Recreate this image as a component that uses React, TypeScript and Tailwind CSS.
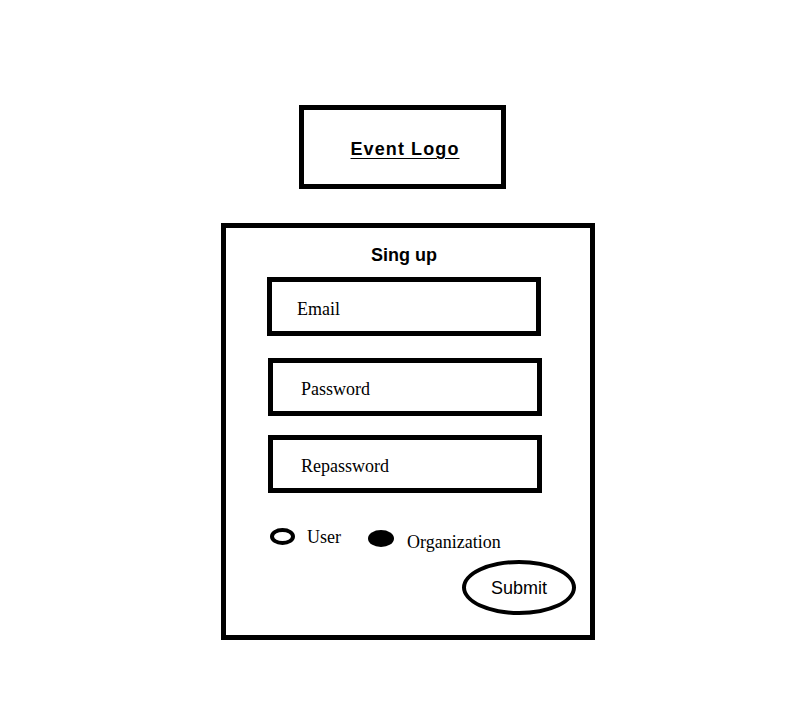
import React, { useState } from 'react'

const sans = { fontFamily: '"Liberation Sans", Arial, sans-serif' }

const fields = [
  { label: 'Email', cls: 'mt-[12px] ml-[41px] h-[59px]', pad: 'pl-[25px]' },
  { label: 'Password', cls: 'mt-[22px] ml-[42px] h-[58px]', pad: 'pl-[28px]' },
  { label: 'Repassword', cls: 'mt-[19px] ml-[42px] h-[58px]', pad: 'pl-[28px]' },
]

function App() {
  const [ role, setRole ] = useState('organization')

  return (
    <div className="min-h-[720px] w-full bg-white pt-[105px] flex flex-col items-start font-['Liberation_Sans',Arial,sans-serif] text-black">
      {/* logo placeholder */}
      <div className="ml-[299px] w-[207px] h-[84px] border-[5px] border-black flex items-center justify-center pl-[5px] pt-[4px]">
        <span className="text-[18px] leading-[20px] font-bold underline underline-offset-[3px] tracking-[1.1px]">Event Logo</span>
      </div>

      <div className="mt-[34px] ml-[221px] w-[374px] h-[417px] border-[5px] border-black flex flex-col">
        <h2 className="pt-[17px] pr-[8px] text-center text-[18px] leading-[20px] font-bold">Sing up</h2>

        {fields.map(f => (
          <div key={f.label} className={`${f.cls} w-[274px] border-[5px] border-black flex items-center ${f.pad} pt-[5px]`}>
            <span className="font-['Liberation_Serif',serif] text-[18px] leading-[21px]">{f.label}</span>
          </div>
        ))}

        <div className="mt-[35px] h-[20px] flex items-start font-['Liberation_Serif',serif] text-[18px] leading-[21px]">
          <button
            className={role === 'user' ? 'ml-[44px] w-[25px] h-[17px] rounded-[50%] bg-black' : 'ml-[44px] w-[25px] h-[17px] rounded-[50%] border-[4px] border-black'}
            onClick={() => setRole('user')}
          />
          <span className="ml-[12px] mt-[-1px]">User</span>
          <button
            className={role === 'organization' ? 'ml-[27px] mt-[2px] w-[26px] h-[17px] rounded-[50%] bg-black' : 'ml-[27px] mt-[2px] w-[26px] h-[17px] rounded-[50%] border-[4px] border-black'}
            onClick={() => setRole('organization')}
          />
          <span className="ml-[13px] mt-[4px]">Organization</span>
        </div>

        <button
          style={sans}
          className="mt-[12px] mr-[14px] self-end w-[114px] h-[55px] border-[4px] border-black rounded-[50%] flex items-center justify-center text-[18px] leading-[20px]"
        >
          Submit
        </button>
      </div>
    </div>
  )
}

export default App
